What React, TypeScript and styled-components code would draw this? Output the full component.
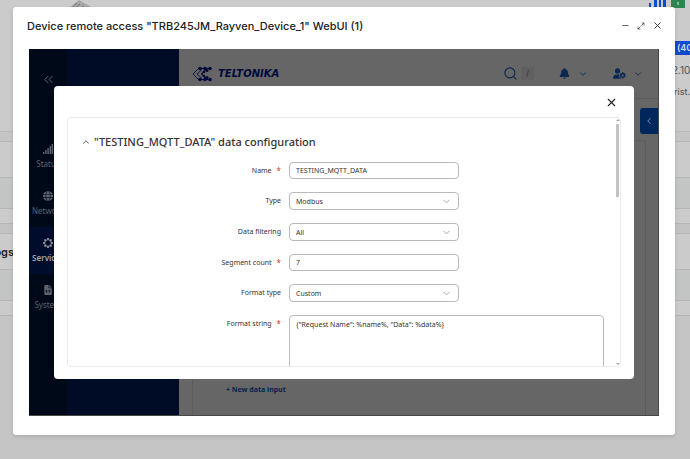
import React from "react";
import styled, { createGlobalStyle, css } from "styled-components";
import { ChevronDown, ChevronLeft, ChevronUp, ChevronsLeft, Maximize2, Minus, Search, X } from "lucide-react";
import { FaBell, FaFileCode, FaGlobe, FaUserGear } from "react-icons/fa6";

const GlobalStyle = createGlobalStyle`
  *, *::before, *::after { box-sizing: border-box; }
  body { margin: 0; font-family: "Noto Sans", sans-serif; color: #333; }
  button, input, select, textarea { font-family: inherit; margin: 0; }
  a { color: inherit; text-decoration: none; }
`;

const iconButton = css`
  display: flex;
  align-items: center;
  justify-content: center;
  padding: 0;
  border: 0;
  background: none;
  color: inherit;
  cursor: pointer;
`;

const Screen = styled.div`
  position: relative;
  display: flex;
  min-height: 100vh;
  padding: 7px 15px 24px 13px;
  background: #c5c5c5;
  overflow: hidden;
`;

/* Page behind the window */

const Backdrop = styled.div`
  position: absolute;
  inset: 0;
  display: flex;
  flex-direction: column;
  font-family: Inter, sans-serif;
`;

const Summary = styled.section`
  display: flex;
  flex-direction: column;
  align-items: flex-end;
  height: 132px;
  flex: none;
  border-bottom: 1px solid #b8b8b8;
  background: #cbcbcb;
`;

const SummaryTop = styled.div`
  display: flex;
  align-items: flex-start;
  justify-content: space-between;
  align-self: stretch;
  height: 41px;
  padding: 0 5px 0 69px;
`;

const SummaryStatus = styled.div`
  display: flex;
  gap: 5px;
`;

const AddButton = styled.button`
  ${iconButton}
  width: 14px;
  height: 8px;
  background: #2f8551;
  color: #d5e5d9;
`;

const NetworkBadge = styled.span`
  height: 14px;
  padding: 0 0 0 22px;
  margin-right: -3px;
  background: #0c4bcb;
  color: #d5ddec;
  font-size: 9px;
  font-weight: 600;
  line-height: 13px;
`;

const SummaryText = styled.span<{ $small?: boolean }>`
  height: 22px;
  margin: ${(p) => (p.$small ? "0" : "4px -3px 0 0")};
  color: #4f4f4f;
  font-size: ${(p) => (p.$small ? 9 : 10)}px;
  line-height: 22px;
`;

const Band = styled.div<{ $height: number; $tone: string }>`
  display: flex;
  align-items: center;
  flex: none;
  height: ${(p) => p.$height}px;
  border-bottom: 1px solid #b6b6b6;
  background: ${(p) => p.$tone};
`;

const BandTitle = styled.h3`
  display: flex;
  justify-content: flex-end;
  width: 14px;
  margin: 0;
  color: #222;
  font-size: 11px;
  font-weight: 600;
`;

/* Remote access window */

const Window = styled.section`
  position: relative;
  display: flex;
  flex: 1;
  flex-direction: column;
  padding: 0 16px 19px;
  border-radius: 3px;
  background: #fff;
  box-shadow: 0 2px 4px rgba(0, 0, 0, 0.12);
`;

const WindowBar = styled.header`
  display: flex;
  align-items: center;
  justify-content: space-between;
  height: 42px;
  padding: 0 0 5px;
`;

const WindowTitle = styled.h1`
  margin: 0 0 0 -2px;
  color: #222;
  font-family: Inter, sans-serif;
  font-size: 11px;
  font-weight: 500;
  line-height: 16px;
  white-space: nowrap;
`;

const WindowActions = styled.div`
  display: flex;
  margin-right: -6px;
  color: #333;
`;

const WindowButton = styled.button`
  ${iconButton}
  width: 16px;
  height: 16px;
`;

const Frame = styled.div`
  position: relative;
  display: grid;
  grid-template-columns: 38px 112px 1fr;
  flex: 1;
  border-right: 1px solid #484848;
  border-bottom: 1px solid #484848;
`;

const Rail = styled.nav`
  display: flex;
  flex-direction: column;
  background: #000918;
  color: #606570;
`;

const RailToggle = styled.button`
  ${iconButton}
  height: 60px;
  margin-bottom: 24px;
`;

const RailLink = styled.a<{ $active?: boolean }>`
  display: flex;
  flex-direction: column;
  align-items: center;
  gap: 3px;
  height: 47px;
  padding-top: 11px;
  background: ${(p) => (p.$active ? "#000c2b" : "transparent")};
  color: ${(p) => (p.$active ? "#a4a6ab" : "#5d626c")};
  font-size: 8px;
  font-weight: ${(p) => (p.$active ? 600 : 400)};
  line-height: 14px;
`;

const Submenu = styled.div`
  background: #000c25;
`;

const Main = styled.div`
  display: flex;
  flex-direction: column;
  background: #666;
`;

const TopBar = styled.header`
  display: flex;
  align-items: center;
  height: 50px;
  padding: 0 15px 0 13px;
  border-bottom: 1px solid #5c5c5c;
  color: #0a2852;
`;

const Brand = styled.a`
  display: flex;
  align-items: center;
  color: #00093b;
  font-family: "DejaVu Sans", sans-serif;
  font-size: 10px;
  font-style: italic;
  font-weight: 700;
`;

const Tools = styled.div`
  display: flex;
  align-items: center;
  gap: 25px;
  margin-left: auto;
`;

const Tool = styled.button<{ $gap: number }>`
  ${iconButton}
  gap: ${(p) => p.$gap}px;
`;

const KeyHint = styled.kbd`
  width: 13px;
  border-radius: 2px;
  background: #606060;
  color: #303640;
  font-family: inherit;
  font-size: 8px;
  line-height: 13px;
`;

const DrawerTab = styled.button`
  ${iconButton}
  align-self: flex-end;
  width: 18px;
  height: 26px;
  margin-top: 9px;
  border-radius: 3px 0 0 3px;
  background: #00275b;
  color: #93a2b6;
`;

const Canvas = styled.div`
  display: flex;
  flex: 1;
  align-items: flex-end;
  margin: 6px 12px 0 13px;
  padding: 0 33px 19px;
  border: solid #5c5c5c;
  border-width: 1px 1px 0;
  border-radius: 3px 3px 0 0;
`;

const AddInput = styled.button`
  padding: 0;
  border: 0;
  background: none;
  color: #06244c;
  font-size: 7px;
  font-weight: 700;
  line-height: 12px;
  cursor: pointer;
`;

/* Configuration modal */

const Modal = styled.section`
  position: absolute;
  inset: 37px 24px 36px 25px;
  display: flex;
  flex-direction: column;
  padding: 0 13px 12px;
  border-radius: 4px;
  background: #fff;
`;

const ModalBar = styled.header`
  display: flex;
  align-items: center;
  justify-content: flex-end;
  height: 31px;
  flex: none;
  padding: 2px 2px 0 0;
  color: #222;
`;

const Panel = styled.div`
  display: flex;
  flex: 1;
  min-height: 0;
  border: 1px solid #ebebeb;
  border-radius: 3px;
  overflow: hidden;
`;

const PanelBody = styled.div`
  flex: 1;
  min-width: 0;
  padding: 14px 11px 0 13px;
  overflow: hidden;
`;

const SectionHeading = styled.h2`
  display: flex;
  align-items: center;
  gap: 3px;
  margin: 0 0 10px;
  color: #333;
  font-size: 11px;
  font-weight: 500;
  line-height: 20px;
  white-space: nowrap;
`;

const Form = styled.form`
  display: grid;
  grid-template-columns: 200px 1fr;
  column-gap: 8px;
  row-gap: 13px;
`;

const Label = styled.label`
  display: flex;
  justify-content: flex-end;
  gap: 5px;
  height: 17px;
  color: #333;
  font-size: 7px;
  line-height: 17px;
`;

const Required = styled.span`
  color: #e5331c;
  font-size: 8px;
`;

const fieldStyle = css`
  width: 100%;
  border: 1px solid #b9b9be;
  border-radius: 4px;
  outline: 0;
  background: #fff;
  color: #333;
  font-size: 7px;
  line-height: 15px;
`;

const Input = styled.input`
  ${fieldStyle}
  max-width: 170px;
  height: 17px;
  padding: 0 6px;
`;

const SelectBox = styled.div`
  display: grid;
  align-items: center;
  max-width: 170px;
  height: 18px;
  color: #999;

  > * { grid-area: 1 / 1; }
  > svg { justify-self: end; margin-right: 7px; pointer-events: none; }
`;

const Select = styled.select`
  ${fieldStyle}
  height: 18px;
  padding: 0 6px;
  appearance: none;
`;

const TextArea = styled.textarea`
  ${fieldStyle}
  display: block;
  height: 86px;
  padding: 1px 6px;
  resize: none;
`;

const ScrollTrack = styled.div`
  display: flex;
  flex-direction: column;
  align-items: center;
  width: 5px;
  padding: 1px 0;
  color: #aaa;
`;

const ScrollThumb = styled.div`
  width: 3px;
  height: 73px;
  margin: 3px 0 auto;
  background: #c3c3c3;
`;

const BrandMark = () => (
  <svg width="26" height="18" viewBox="0 0 26 18" fill="none" stroke="currentColor" aria-hidden="true">
    <path d="M7.5 2.5 L1 9 L7.5 15.5 M10 4.5 L5 9 L10 13.5" strokeWidth="0.8" />
    <path d="M8 3.5h11M8 14.5h11M14 4.5 9.5 9 14 13.5" strokeWidth="1.1" />
    <g fill="currentColor" stroke="none">
      {[8, 13, 18].map((x) => (
        <React.Fragment key={x}>
          <circle cx={x} cy="3.5" r="1.8" />
          <circle cx={x} cy="14.5" r="1.8" />
        </React.Fragment>
      ))}
      <circle cx="15" cy="5.5" r="1.5" />
      <circle cx="15" cy="12.5" r="1.5" />
      <circle cx="12" cy="7" r="1.3" />
      <circle cx="12" cy="11" r="1.3" />
    </g>
  </svg>
);

const SignalIcon = () => (
  <svg width="10" height="10" viewBox="0 0 10 10" fill="currentColor" aria-hidden="true">
    <path d="M0 8h1.4v2H0zM2.2 6h1.4v4H2.2zM4.4 4h1.4v6H4.4zM6.6 2H8v8H6.6zM8.6 0H10v10H8.6z" />
  </svg>
);

const GearIcon = () => (
  <svg width="10" height="10" viewBox="0 0 20 20" fill="none" stroke="currentColor" aria-hidden="true">
    <circle cx="10" cy="10" r="6.8" strokeWidth="1.9" />
    <path d="M10 0v3M10 17v3M0 10h3M17 10h3M3 3l2.2 2.2M14.8 14.8 17 17M3 17l2.2-2.2M14.8 5.2 17 3" strokeWidth="3" />
  </svg>
);

const DeviceSketch = () => (
  <svg width="22" height="10" viewBox="0 0 22 10" aria-hidden="true">
    <path d="M0 8 10 0 22 7v3H0z" fill="#a6a6a6" />
    <path d="M3 7.5 8 3M6 8l5-4M10 9l5-3" stroke="#777" strokeWidth="1" />
  </svg>
);

const ReceptionBars = () => (
  <svg width="17" height="8" viewBox="0 0 17 8" fill="#0c4bcb" aria-hidden="true">
    <path d="M0 3h2v5H0zM5 0h3v8H5zM10 0h2v8h-2zM14 0h3v8h-3z" />
  </svg>
);

const navItems = [
  { label: "Status", icon: <SignalIcon /> },
  { label: "Network", icon: <FaGlobe size={10} /> },
  { label: "Services", icon: <GearIcon />, active: true },
  { label: "System", icon: <FaFileCode size={10} /> },
];

const bands = [
  { height: 10, tone: "#c5c5c5" },
  { height: 36, tone: "#cbcbcb" },
  { height: 31, tone: "#c3c5c5" },
  { height: 15, tone: "#cbcbcb" },
  { height: 10, tone: "#c3c3c3" },
  { height: 36, tone: "#cbcbcb", title: "ogs" },
  { height: 31, tone: "#c3c5c5" },
  { height: 15, tone: "#cbcbcb" },
];

type FieldProps = { id: string; label: string; value: string; kind: "text" | "select" | "area"; required?: boolean };

const fields: FieldProps[] = [
  { id: "name", label: "Name", value: "TESTING_MQTT_DATA", kind: "text", required: true },
  { id: "type", label: "Type", value: "Modbus", kind: "select" },
  { id: "filtering", label: "Data filtering", value: "All", kind: "select" },
  { id: "segments", label: "Segment count", value: "7", kind: "text", required: true },
  { id: "format", label: "Format type", value: "Custom", kind: "select" },
  { id: "string", label: "Format string", value: '{"Request Name": %name%, "Data": %data%}', kind: "area", required: true },
];

const Field = ({ id, label, value, kind, required }: FieldProps) => (
  <>
    <Label htmlFor={id}>
      {label}
      {required && <Required>*</Required>}
    </Label>
    {kind === "text" && <Input id={id} defaultValue={value} />}
    {kind === "area" && <TextArea id={id} defaultValue={value} spellCheck={false} />}
    {kind === "select" && (
      <SelectBox>
        <Select id={id} defaultValue={value}>
          <option>{value}</option>
        </Select>
        <ChevronDown size={11} strokeWidth={1.8} />
      </SelectBox>
    )}
  </>
);

export default function App() {
  return (
    <Screen>
      <GlobalStyle />
      <Backdrop>
        <Summary>
          <SummaryTop>
            <DeviceSketch />
            <SummaryStatus>
              <ReceptionBars />
              <AddButton aria-label="Add">
                <svg width="4" height="5" viewBox="0 0 4 5" aria-hidden="true">
                  <path d="M2 0v3" stroke="currentColor" />
                </svg>
              </AddButton>
            </SummaryStatus>
          </SummaryTop>
          <NetworkBadge>(4G</NetworkBadge>
          <SummaryText>2.10,</SummaryText>
          <SummaryText $small>rist.</SummaryText>
        </Summary>
        {bands.map((band, i) => (
          <Band key={i} $height={band.height} $tone={band.tone}>
            {band.title && <BandTitle>{band.title}</BandTitle>}
          </Band>
        ))}
      </Backdrop>

      <Window>
        <WindowBar>
          <WindowTitle>Device remote access "TRB245JM_Rayven_Device_1" WebUI (1)</WindowTitle>
          <WindowActions>
            <WindowButton aria-label="Minimize"><Minus size={9} /></WindowButton>
            <WindowButton aria-label="Maximize"><Maximize2 size={8} /></WindowButton>
            <WindowButton aria-label="Close window"><X size={11} /></WindowButton>
          </WindowActions>
        </WindowBar>

        <Frame>
          <Rail>
            <RailToggle aria-label="Collapse menu"><ChevronsLeft size={15} strokeWidth={1.6} /></RailToggle>
            {navItems.map((item) => (
              <RailLink key={item.label} href="#" $active={item.active}>
                {item.icon}
                {item.label}
              </RailLink>
            ))}
          </Rail>
          <Submenu />
          <Main>
            <TopBar>
              <Brand href="#"><BrandMark />TELTONIKA</Brand>
              <Tools>
                <Tool $gap={3} aria-label="Search"><Search size={15} strokeWidth={1.8} /><KeyHint>/</KeyHint></Tool>
                <Tool $gap={8} aria-label="Notifications"><FaBell size={11} /><ChevronDown size={10} /></Tool>
                <Tool $gap={7} aria-label="Account"><FaUserGear size={13} /><ChevronDown size={10} /></Tool>
              </Tools>
            </TopBar>
            <DrawerTab aria-label="Open drawer"><ChevronLeft size={10} /></DrawerTab>
            <Canvas>
              <AddInput>+ New data input</AddInput>
            </Canvas>
          </Main>

          <Modal>
            <ModalBar>
              <WindowButton aria-label="Close dialog"><X size={13} /></WindowButton>
            </ModalBar>
            <Panel>
              <PanelBody>
                <SectionHeading>
                  <ChevronUp size={10} />
                  "TESTING_MQTT_DATA" data configuration
                </SectionHeading>
                <Form>
                  {fields.map((field) => (
                    <Field key={field.id} {...field} />
                  ))}
                </Form>
              </PanelBody>
              <ScrollTrack>
                <svg width="4" height="2" viewBox="0 0 4 2" fill="currentColor" aria-hidden="true"><path d="M2 0 4 2H0z" /></svg>
                <ScrollThumb />
                <svg width="4" height="2" viewBox="0 0 4 2" fill="currentColor" aria-hidden="true"><path d="M0 0h4L2 2z" /></svg>
              </ScrollTrack>
            </Panel>
          </Modal>
        </Frame>
      </Window>
    </Screen>
  );
}
